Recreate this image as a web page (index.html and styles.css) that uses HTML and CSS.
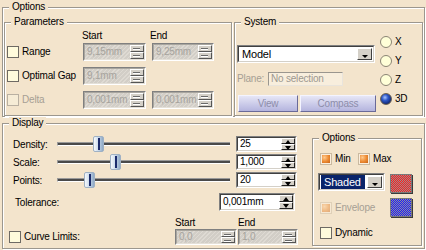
FILE: index.html
```html
<!DOCTYPE html>
<html lang="en">
<head>
    <meta charset="UTF-8">
    <title>Options</title>
    <link rel="stylesheet" href="styles.css">
</head>
<body>
<div class="dialog">
    <fieldset class="group outer">
        <legend>Options</legend>
        <div class="outer-row">
            <fieldset class="group params">
                <legend>Parameters</legend>
                <div class="col-heads"><span>Start</span><span>End</span></div>
                <div class="param-rows">
                    <label class="check-label"><span class="check"></span>Range</label>
                    <div class="field off w63"><div class="well"><span class="value">9,15mm</span><span class="spinner"><i></i><i></i></span></div></div>
                    <div class="field off w62"><div class="well"><span class="value">9,25mm</span><span class="spinner"><i></i><i></i></span></div></div>

                    <label class="check-label"><span class="check"></span>Optimal Gap</label>
                    <div class="field off w63"><div class="well"><span class="value">9,1mm</span><span class="spinner"><i></i><i></i></span></div></div>
                    <span></span>

                    <label class="check-label dim"><span class="check"></span>Delta</label>
                    <div class="field off w63"><div class="well"><span class="value">0,001mm</span><span class="spinner"><i></i><i></i></span></div></div>
                    <div class="field off w62"><div class="well"><span class="value">0,001mm</span><span class="spinner"><i></i><i></i></span></div></div>
                </div>
            </fieldset>

            <fieldset class="group system">
                <legend>System</legend>
                <div class="system-body">
                    <div class="system-left">
                        <div class="field combo-model"><div class="well"><span class="value">Model</span><span class="drop"></span></div></div>
                        <div class="plane-row">
                            <span class="plane-label">Plane:</span>
                            <span class="plane-field">No selection</span>
                        </div>
                        <div class="btn-row">
                            <span class="btn view">View</span>
                            <span class="btn compass">Compass</span>
                        </div>
                    </div>
                    <div class="system-radios">
                        <div class="radio-row"><span class="radio"></span>X</div>
                        <div class="radio-row"><span class="radio"></span>Y</div>
                        <div class="radio-row"><span class="radio"></span>Z</div>
                        <div class="radio-row"><span class="radio on"></span>3D</div>
                    </div>
                </div>
            </fieldset>
        </div>
    </fieldset>

    <fieldset class="group display">
        <legend>Display</legend>
        <div class="display-body">
            <div class="display-left">
                <div class="slider-row">
                    <span>Density:</span>
                    <div class="track"><span class="thumb" style="left: 35px"></span></div>
                    <div class="field w61 h16"><div class="well"><span class="value">25</span><span class="spinner on"><i class="up"></i><i class="down"></i></span></div></div>
                </div>
                <div class="slider-row">
                    <span>Scale:</span>
                    <div class="track"><span class="thumb" style="left: 52px"></span></div>
                    <div class="field w61 h16"><div class="well"><span class="value">1,000</span><span class="spinner on"><i class="up"></i><i class="down"></i></span></div></div>
                </div>
                <div class="slider-row">
                    <span>Points:</span>
                    <div class="track"><span class="thumb" style="left: 26px"></span></div>
                    <div class="field w61 h16"><div class="well"><span class="value">20</span><span class="spinner on"><i class="up"></i><i class="down"></i></span></div></div>
                </div>

                <div class="tol-row">
                    <span class="tol-label">Tolerance:</span>
                    <div class="field w76"><div class="well"><span class="value">0,001mm</span><span class="spinner on"><i class="up"></i><i class="down"></i></span></div></div>
                </div>

                <div class="curve-row">
                    <label class="check-label curve-check"><span class="check"></span>Curve Limits:</label>
                    <div class="limit-col start">
                        <span>Start</span>
                        <div class="field off w62 h16"><div class="well"><span class="value">0,0</span><span class="spinner"><i></i><i></i></span></div></div>
                    </div>
                    <div class="limit-col end">
                        <span>End</span>
                        <div class="field off w60 h16"><div class="well"><span class="value">1,0</span><span class="spinner"><i></i><i></i></span></div></div>
                    </div>
                </div>
            </div>

            <fieldset class="group opts">
                <legend>Options</legend>
                <div class="opts-body">
                    <div class="minmax">
                        <label class="check-label"><span class="check on"></span><span class="min-text">Min</span></label>
                        <label class="check-label"><span class="check on"></span>Max</label>
                    </div>
                    <div class="shade-row">
                        <div class="field combo-shade"><div class="well"><span class="value">Shaded</span><span class="drop"></span></div></div>
                        <span class="swatch red"></span>
                    </div>
                    <div class="env-row">
                        <label class="check-label dim env"><span class="check on"></span>Envelope</label>
                        <span class="swatch blue"></span>
                    </div>
                    <div class="dyn-row">
                        <label class="check-label"><span class="check"></span>Dynamic</label>
                    </div>
                </div>
            </fieldset>
        </div>
    </fieldset>
</div>
</body>
</html>
```

FILE: styles.css
```css
* {
    box-sizing: border-box;
}

body {
    margin: 0;
    background-color: #f3e4cc;
    font-family: "Liberation Sans", Arial, sans-serif;
    font-size: 10px;
    letter-spacing: -0.2px;
    line-height: 12px;
    color: #000;
}

.dialog {
    width: 426px;
    height: 250px;
    padding: 1px 1px 0 2px;
    overflow: hidden;
}

/* etched group boxes */
.group {
    margin: 0;
    padding: 0;
    min-width: 0;
    border: 1px solid #9c978e;
    box-shadow: 1px 1px 0 #fff, inset 1px 1px 0 #fff;
}

.group > legend {
    margin-left: 6px;
    padding: 0 3px;
    line-height: 12px;
    background-color: #f3e4cc;
}

.outer {
    width: 423px;
    height: 116px;
}

.outer-row {
    display: flex;
    gap: 2px;
    padding: 3px 0 0 1px;
}

.params {
    width: 228px;
    height: 100px;
}

.system {
    width: 189px;
    height: 100px;
}

/* parameters */
.col-heads {
    display: flex;
    height: 12px;
    margin: 2px 0 1px 77px;
}

.col-heads span:first-child {
    width: 68px;
}

.param-rows {
    display: grid;
    grid-template-columns: 78px 69px 62px;
    grid-auto-rows: 18px;
    row-gap: 6px;
    align-items: center;
}

.check-label {
    display: flex;
    align-items: center;
    gap: 3px;
    margin-left: 2px;
    white-space: nowrap;
}

.check-label.dim {
    color: #a69f94;
}

.check {
    flex: none;
    width: 12px;
    height: 12px;
    border: 1px solid #6e6a64;
    background-color: #fffbdc;
}

.dim .check {
    border-color: #b9b0a2;
    background-color: #f6ecd6;
}

.check.on {
    border: 1px solid #c9b9a0;
    background: radial-gradient(circle at 35% 35%, #ffc98c 0, #ec8a32 45%, #b9560f 100%);
    box-shadow: inset 0 0 0 1px #fbeedd;
}

.dim .check.on {
    opacity: 0.45;
}

/* fields and spinners */
.field {
    height: 18px;
    border: 1px solid;
    border-color: #808080 #fff #fff #808080;
}

.field .well {
    display: flex;
    height: 100%;
    border: 1px solid;
    border-color: #404040 #d4d0c8 #d4d0c8 #404040;
    background-color: #fff;
}

.field .value {
    flex: 1;
    padding-left: 2px;
    overflow: hidden;
    white-space: nowrap;
    align-self: center;
}

.field.off .well {
    border-color: #a9a69f #e4e0d8 #e4e0d8 #a9a69f;
    background: repeating-linear-gradient(135deg, #dedad3 0 1px, #d2cec7 1px 3px);
}

.field.off .value {
    color: #a6a39d;
}

.w60 { width: 60px; }
.w61 { width: 61px; }
.w62 { width: 62px; }
.w63 { width: 63px; }
.w76 { width: 76px; }
.h16 { height: 16px; }

.spinner {
    flex: none;
    display: flex;
    flex-direction: column;
    width: 14px;
}

.spinner i {
    flex: 1;
    position: relative;
    background-color: #d4d0c8;
    border: 1px solid;
    border-color: #fff #555 #555 #fff;
}

.spinner i::before {
    content: "";
    position: absolute;
    left: 2px;
    top: 2px;
    width: 7px;
    height: 1px;
    background-color: #6a6a6a;
    box-shadow: 0 1px 0 #fff;
}

.spinner.on i {
    border-color: #fff #222 #222 #fff;
}

.spinner.on i::before {
    left: 3px;
    top: 1px;
    width: 0;
    height: 0;
    background: none;
    box-shadow: none;
    border-left: 3px solid transparent;
    border-right: 3px solid transparent;
}

.spinner.on .up::before {
    border-bottom: 4px solid #000;
}

.spinner.on .down::before {
    border-top: 4px solid #000;
}

.drop {
    flex: none;
    position: relative;
    width: 15px;
    margin: 1px;
    background-color: #d4d0c8;
    border: 1px solid;
    border-color: #fff #404040 #404040 #fff;
}

.drop::before {
    content: "";
    position: absolute;
    left: 4px;
    top: 6px;
    border-left: 3px solid transparent;
    border-right: 3px solid transparent;
    border-top: 3px solid #000;
}

/* system */
.system-body {
    display: flex;
    padding-left: 2px;
}

.system-left {
    display: flex;
    flex-direction: column;
    width: 139px;
    padding-top: 17px;
}

.combo-model {
    width: 138px;
}

.combo-model .value {
    padding-left: 3px;
    font-size: 11px;
}

.plane-row {
    display: flex;
    align-items: center;
    margin-top: 9px;
}

.plane-label {
    width: 31px;
    color: #a69f94;
}

.plane-field {
    width: 75px;
    height: 14px;
    padding-left: 2px;
    line-height: 12px;
    color: #9d9890;
    background-color: #f8eedd;
    border: 1px solid;
    border-color: #9a968f #e9e4dc #e9e4dc #9a968f;
}

.btn-row {
    display: flex;
    gap: 2px;
    margin: 9px 0 0 1px;
}

.btn {
    height: 17px;
    line-height: 15px;
    text-align: center;
    color: #8d8daa;
    background: linear-gradient(#e6e6f6, #b4b4de);
    border: 1px solid;
    border-color: #f4f4ff #6a6a98 #6a6a98 #f4f4ff;
}

.btn.view { width: 60px; }
.btn.compass { width: 76px; }

.system-radios {
    margin-left: 4px;
    padding-top: 4px;
}

.radio-row {
    display: flex;
    align-items: center;
    gap: 3px;
    height: 19px;
}

.radio {
    width: 12px;
    height: 12px;
    border-radius: 50%;
    border: 1px solid #8b8474;
    background-color: #ffffd8;
}

.radio.on {
    border-color: #6a6050;
    background: radial-gradient(circle at 40% 35%, #a8c4ff 0, #2d58c8 35%, #0b1c5e 85%);
}

/* display */
.display {
    width: 423px;
    height: 132px;
}

.display-body {
    display: flex;
    padding-top: 3px;
}

.display-left {
    width: 309px;
    padding: 4px 0 0 10px;
}

.slider-row {
    display: grid;
    grid-template-columns: 44px 173px 67px;
    align-items: center;
    height: 16px;
    margin-bottom: 2px;
}

.slider-row > span {
    padding-top: 2px;
}

.slider-row .field {
    margin-left: 6px;
}

.track {
    position: relative;
    height: 4px;
    background-color: #4a4a4a;
    border-top: 1px solid #9a9a9a;
    border-bottom: 1px solid #fff;
    border-left: 1px solid #9a9a9a;
}

.thumb {
    position: absolute;
    top: -7px;
    width: 11px;
    height: 16px;
    border-radius: 2px;
    border: 1px solid #9fb1c4;
    background: linear-gradient(90deg, #f6f9fc 0, #cddcec 45%, #8ea9c6 100%);
}

.thumb::after {
    content: "";
    position: absolute;
    left: 4px;
    top: 1px;
    bottom: 1px;
    width: 2px;
    background-color: #1b2b6b;
}

.tol-row {
    display: flex;
    align-items: center;
    margin-top: 5px;
}

.tol-label {
    width: 204px;
    margin-left: 2px;
    padding-top: 1px;
}

.curve-row {
    display: flex;
    align-items: flex-end;
    margin: 6px 0 0 -6px;
}

.curve-check {
    width: 166px;
    height: 16px;
}

.limit-col {
    display: flex;
    flex-direction: column;
}

.limit-col.end {
    margin-left: 1px;
}

/* inner options */
.opts {
    width: 110px;
    height: 114px;
}

.opts-body {
    padding: 9px 0 0 7px;
}

.minmax {
    display: flex;
    height: 12px;
}

.min-text {
    width: 23px;
}

.minmax .check-label {
    margin-left: 0;
}

.shade-row {
    display: flex;
    align-items: flex-start;
    margin: 8px 0 0 -2px;
}

.combo-shade {
    width: 67px;
}

.combo-shade .value {
    margin: 1px;
    padding-left: 3px;
    height: 14px;
    line-height: 14px;
    font-size: 11px;
    color: #fff;
    background-color: #0a246a;
}

.swatch {
    width: 22px;
    height: 19px;
    margin: 1px 0 0 5px;
    border: 1px solid #7a7a7a;
    box-shadow: 1px 1px 0 #3a3a3a;
}

.swatch.red {
    background: repeating-conic-gradient(#ff1a1a 0 25%, #9a8f8f 0 50%) 0 0 / 2px 2px;
}

.swatch.blue {
    margin: 0 0 0 0;
    background: repeating-conic-gradient(#1a1aff 0 25%, #8f8f9a 0 50%) 0 0 / 2px 2px;
}

.env-row {
    display: flex;
    align-items: flex-start;
    margin-top: 5px;
}

.env {
    width: 70px;
    margin: 4px 0 0 0;
}

.dyn-row {
    margin-top: 10px;
}

.dyn-row .check-label {
    margin-left: 0;
}
```
